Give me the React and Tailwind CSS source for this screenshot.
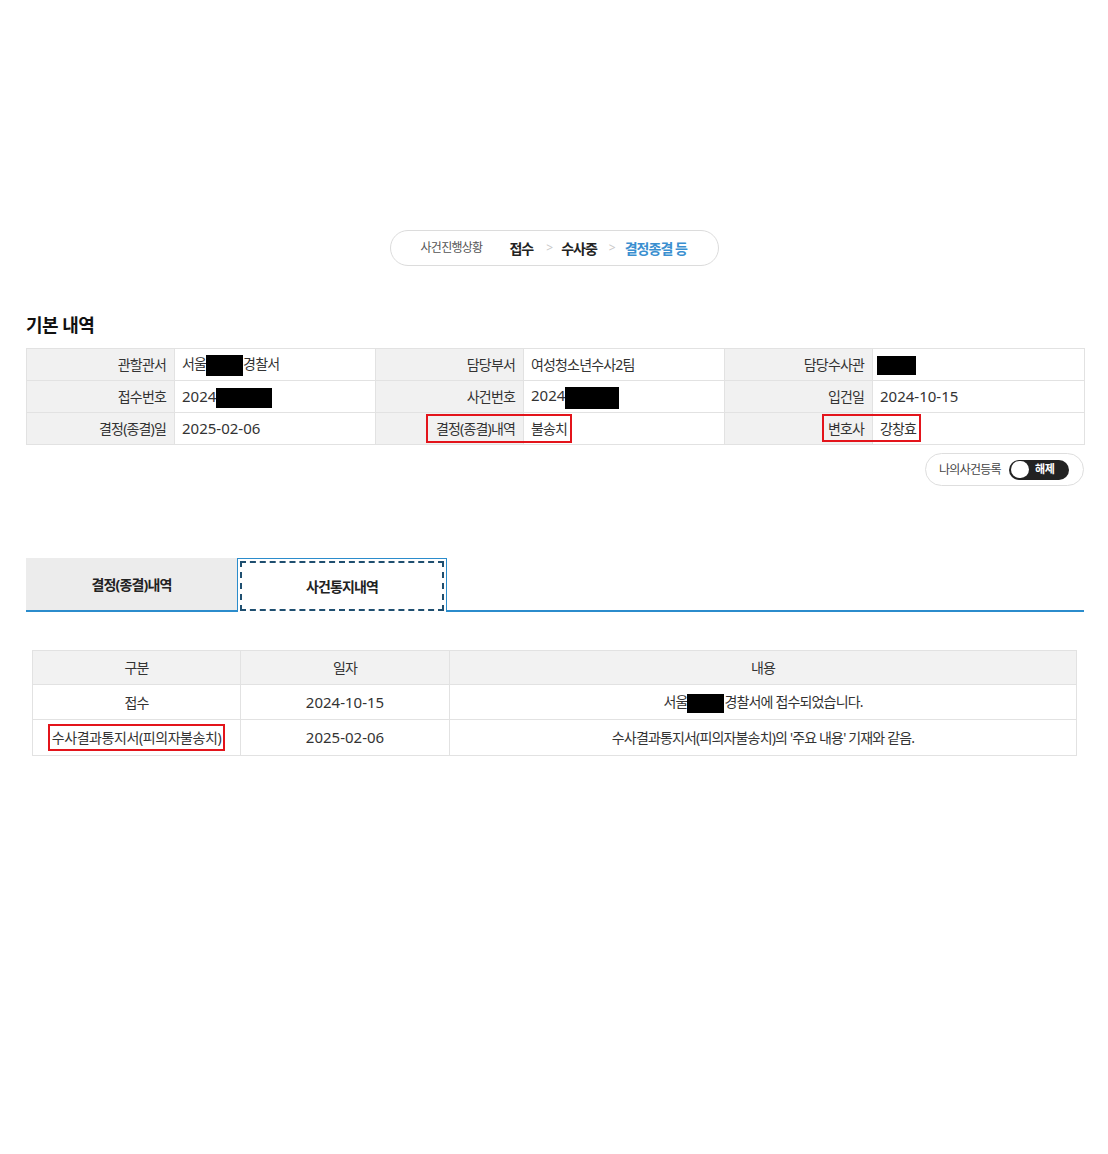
import React from "react";

const font = { fontFamily: '"Noto Sans", "Noto Sans CJK KR", sans-serif' };

const Redact = ({ w, h }) => (
    <span className={`inline-block bg-black align-middle ${w} ${h}`} />
);

const Label = ({ children }) => (
    <td className="bg-[#f1f1f1] border border-[#e2e2e2] text-right pr-[8px] tracking-[-0.06em] text-[#333]">
        {children}
    </td>
);

const Value = ({ children }) => (
    <td className="border border-[#e2e2e2] pl-[7px] text-[#333]">{children}</td>
);

const Num = ({ children }) => <span className="text-[15px]">{children}</span>;

const App = () => {
    return (
        <div className="min-h-[1154px] bg-white pt-[230px]" style={font}>
            {/* 진행상황 */}
            <div className="flex justify-center">
                <div className="h-[36px] w-[329px] rounded-full border border-[#dcdcdc] flex items-center pl-[30px] text-[14px] tracking-[-0.07em]">
                    <span className="text-[12px] text-[#555] tracking-[-0.06em]">사건진행상황</span>
                    <span className="ml-[27px] font-bold text-[#222]">접수</span>
                    <span className="ml-[13px] mr-[9px] text-[#c8c8c8] text-[12px]">&gt;</span>
                    <span className="font-bold text-[#222]">수사중</span>
                    <span className="ml-[12px] mr-[10px] text-[#c8c8c8] text-[12px]">&gt;</span>
                    <span className="font-bold text-[#3a8fd0]">결정종결 등</span>
                </div>
            </div>

            <div className="ml-[26px] w-[1058px]">
                <h2 className="mt-[47px] h-[24px] leading-[24px] text-[18px] font-semibold text-[#111] tracking-[-0.03em]">
                    기본 내역
                </h2>

                <div className="relative mt-[11px]">
                    <table className="w-full table-fixed border-collapse text-[14px]">
                        <colgroup>
                            <col className="w-[148px]" />
                            <col className="w-[201px]" />
                            <col className="w-[148px]" />
                            <col className="w-[201px]" />
                            <col className="w-[148px]" />
                            <col className="w-[212px]" />
                        </colgroup>
                        <tbody>
                            <tr className="h-[32px]">
                                <Label>관할관서</Label>
                                <Value>
                                    <span className="tracking-[-0.06em]">서울</span>
                                    <Redact w="w-[37px]" h="h-[21px]" />
                                    <span className="tracking-[-0.06em]">경찰서</span>
                                </Value>
                                <Label>담당부서</Label>
                                <Value>
                                    <span className="tracking-[-0.06em]">여성청소년수사2팀</span>
                                </Value>
                                <Label>담당수사관</Label>
                                <Value>
                                    <span className="inline-block -ml-[3px] -mt-[3px] align-middle">
                                        <Redact w="w-[39px]" h="h-[19px]" />
                                    </span>
                                </Value>
                            </tr>
                            <tr className="h-[32px]">
                                <Label>접수번호</Label>
                                <Value>
                                    <Num>2024</Num>
                                    <Redact w="w-[56px]" h="h-[20px]" />
                                </Value>
                                <Label>사건번호</Label>
                                <Value>
                                    <Num>2024</Num>
                                    <Redact w="w-[54px]" h="h-[22px]" />
                                </Value>
                                <Label>입건일</Label>
                                <Value>
                                    <Num>2024-10-15</Num>
                                </Value>
                            </tr>
                            <tr className="h-[32px]">
                                <Label>결정(종결)일</Label>
                                <Value>
                                    <Num>2025-02-06</Num>
                                </Value>
                                <Label>결정(종결)내역</Label>
                                <Value>
                                    <span className="tracking-[-0.06em]">불송치</span>
                                </Value>
                                <Label>변호사</Label>
                                <Value>
                                    <span className="tracking-[-0.06em]">강창효</span>
                                </Value>
                            </tr>
                        </tbody>
                    </table>
                    {/* 표시 박스 */}
                    <div className="absolute left-[400px] top-[66px] w-[146px] h-[29px] border-2 border-[#e3141b]" />
                    <div className="absolute left-[796px] top-[66px] w-[99px] h-[28px] border-2 border-[#e3141b]" />
                </div>

                <div className="mt-[8px] flex justify-end">
                    <div className="h-[33px] w-[159px] rounded-full border border-[#dedede] flex items-center justify-between pl-[13px] pr-[14px]">
                        <span className="text-[12px] text-[#444] tracking-[-0.06em]">나의사건등록</span>
                        <div className="relative h-[20px] w-[60px] rounded-full bg-[#222] flex items-center">
                            <span className="ml-[2px] h-[17px] w-[18px] rounded-full bg-white" />
                            <span className="ml-[6px] text-[11px] font-bold text-white tracking-[-0.04em]">해제</span>
                        </div>
                    </div>
                </div>

                {/* 탭 */}
                <div className="mt-[72px] flex items-end border-b-2 border-[#2b8ccc]">
                    <div className="h-[52px] w-[211px] bg-[#ececec] flex items-center justify-center text-[14px] font-bold text-[#222] tracking-[-0.06em]">
                        결정(종결)내역
                    </div>
                    <div className="h-[54px] w-[210px] -mb-[2px] bg-white border border-b-0 border-[#2b8ccc] p-[2px] pb-[1px]">
                        <div className="h-full w-full border-2 border-dashed border-[#1f4f70] flex items-center justify-center text-[14px] font-bold text-[#222] tracking-[-0.06em]">
                            사건통지내역
                        </div>
                    </div>
                </div>

                {/* 통지내역 */}
                <div className="mt-[38px] ml-[6px] mr-[7px]">
                    <table className="w-full table-fixed border-collapse text-[14px] text-[#333] text-center">
                        <colgroup>
                            <col className="w-[208px]" />
                            <col className="w-[209px]" />
                            <col />
                        </colgroup>
                        <thead>
                            <tr className="h-[34px] bg-[#f2f2f2]">
                                <th className="border border-[#e2e2e2] font-normal tracking-[-0.06em]">구분</th>
                                <th className="border border-[#e2e2e2] font-normal tracking-[-0.06em]">일자</th>
                                <th className="border border-[#e2e2e2] font-normal tracking-[-0.06em]">내용</th>
                            </tr>
                        </thead>
                        <tbody>
                            <tr className="h-[35px]">
                                <td className="border border-[#e2e2e2] tracking-[-0.06em]">접수</td>
                                <td className="border border-[#e2e2e2]">
                                    <Num>2024-10-15</Num>
                                </td>
                                <td className="border border-[#e2e2e2] tracking-[-0.06em]">
                                    서울
                                    <Redact w="w-[37px]" h="h-[19px]" />
                                    경찰서에 접수되었습니다.
                                </td>
                            </tr>
                            <tr className="h-[36px]">
                                <td className="border border-[#e2e2e2]">
                                    <span className="inline-block border-2 border-[#e3141b] px-[2px] h-[27px] leading-[23px] tracking-[-0.03em]">
                                        수사결과통지서(피의자불송치)
                                    </span>
                                </td>
                                <td className="border border-[#e2e2e2]">
                                    <Num>2025-02-06</Num>
                                </td>
                                <td className="border border-[#e2e2e2] tracking-[-0.06em]">
                                    수사결과통지서(피의자불송치)의 '주요 내용' 기재와 같음.
                                </td>
                            </tr>
                        </tbody>
                    </table>
                </div>
            </div>
        </div>
    );
};

export default App;
